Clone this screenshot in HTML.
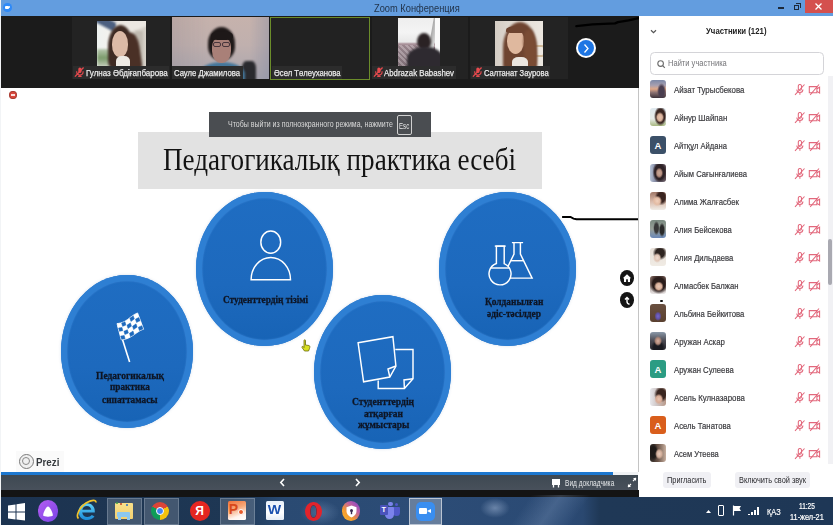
<!DOCTYPE html>
<html><head><meta charset="utf-8">
<style>
*{margin:0;padding:0;box-sizing:border-box}
html,body{width:833px;height:525px;overflow:hidden;background:#fff;font-family:"Liberation Sans",sans-serif}
.a{position:absolute}
.tile{position:absolute;background:#232323;overflow:hidden}
.ph{position:absolute;overflow:hidden}
.nm{position:absolute;height:12px;background:#2c2c2c;color:#e6e6e6;font-size:9.2px;line-height:12px;white-space:nowrap}
.nm span{position:absolute;top:0}
.mic{position:absolute;top:2px}
.av{position:absolute;left:650px;width:16px;height:17.4px;border-radius:3px;overflow:hidden}
.av span{position:absolute;left:0;top:0.5px;width:16px;height:17.4px;color:#fff;font-size:9.5px;font-weight:bold;text-align:center;line-height:17.4px}
.pn{position:absolute;left:673px;font-size:9.6px;color:#444;white-space:nowrap;line-height:11px}
.ic{position:absolute;left:794px}
.circ{position:absolute;border-radius:50%;background:linear-gradient(180deg,#1f6dc2 0%,#1d69bd 60%,#1763b5 100%);box-shadow:inset 0 0 0 5.8px #2e7fd3,inset 0 0 1.5px 6.3px rgba(70,145,225,.6),0 0 3px rgba(80,120,170,.25)}
.ct{position:absolute;font-family:"Liberation Serif",serif;font-weight:bold;color:#151a22;font-size:10.5px;text-align:center;line-height:13px;white-space:nowrap}
.tb{position:absolute;top:498.2px;height:26.5px;background:rgba(255,255,255,.17);border:1px solid rgba(200,215,230,.28)}
.ti{position:absolute}
.t{position:absolute;white-space:nowrap;transform-origin:0 0}
</style></head><body>

<!-- ============ TITLE BAR ============ -->
<div class="a" style="left:0;top:0;width:833px;height:15.5px;background:#639ddf"></div>

<div class="a" style="left:3px;top:3.3px;width:8.5px;height:8.5px;border-radius:50%;background:#2f8af8"></div>
<div class="a" style="left:4.5px;top:5.8px;width:4px;height:3.6px;background:#fff;border-radius:1px"></div>
<div class="a" style="left:8px;top:6px;width:0;height:0;border-top:1.6px solid transparent;border-bottom:1.6px solid transparent;border-right:2.2px solid #fff"></div>
<div class="a" style="left:778px;top:7px;width:6px;height:2px;background:#1d2a3a"></div>
<div class="a" style="left:794px;top:5px;width:5px;height:5px;border:1.2px solid #1d2a3a"></div>
<div class="a" style="left:796px;top:3px;width:5px;height:5px;border-top:1.2px solid #1d2a3a;border-right:1.2px solid #1d2a3a"></div>
<div class="a" style="left:805px;top:0;width:28px;height:12.5px;background:#d4504e"></div>
<svg class="a" style="left:815px;top:3px" width="7" height="7" viewBox="0 0 7 7"><path d="M0.5 0.5L6.5 6.5M6.5 0.5L0.5 6.5" stroke="#fff" stroke-width="1.3"/></svg>

<!-- ============ VIDEO STRIP ============ -->
<div class="a" style="left:1px;top:15.5px;width:639px;height:72.2px;background:#1b1b1b"></div>

<!-- tile 1 -->
<div class="tile" style="left:72.2px;top:17.3px;width:98px;height:62px"></div>
<div class="ph" style="left:97px;top:21.3px;width:48.7px;height:45.5px;background:linear-gradient(90deg,#eef2f0 0%,#f2f2ee 22%,#e0dcd4 45%,#d4cfc6 100%)">
  <div class="a" style="left:-6px;top:-4px;width:26px;height:9px;transform:rotate(28deg);background:#4c6080;filter:blur(.8px)"></div>
  <div class="a" style="left:0;top:28px;width:13px;height:18px;background:linear-gradient(180deg,#b8c8b0,#7a9a6a 50%,#c8d0c0);filter:blur(.8px)"></div>
  <div class="a" style="left:20px;top:-4px;width:30px;height:14px;transform:rotate(-20deg);background:#ece8e2;filter:blur(1px)"></div>
  <div class="a" style="left:38px;top:10px;width:8px;height:36px;background:#c0bab0;filter:blur(1.2px)"></div>
  <div class="a" style="left:11px;top:4px;width:25px;height:44px;border-radius:50% 50% 20% 20%;background:#3e2a22;filter:blur(1px)"></div>
  <div class="a" style="left:26px;top:12px;width:17px;height:36px;border-radius:40% 40% 10% 10%;transform:rotate(-8deg);background:#4a3026;filter:blur(1.1px)"></div>
  <div class="a" style="left:14.5px;top:10px;width:16px;height:26px;border-radius:50% 50% 46% 46%;background:#dcbaa6;filter:blur(.7px)"></div>
  <div class="a" style="left:19px;top:35px;width:14px;height:12px;border-radius:40% 40% 0 0;background:#eeeae4;filter:blur(.6px)"></div>
</div>
<div class="nm" style="left:73px;top:66.2px;width:96px;height:12.9px">
  <svg class="mic" style="left:1.2px;top:1.2px" width="10" height="10" viewBox="0 0 10 10"><rect x="4.3" y="0.4" width="3.2" height="5.6" rx="1.6" fill="#e84a4e"/><path d="M2.7 4.3v0.5a3.2 3.2 0 0 0 6.4 0v-0.5M5.9 8v1.3M4.2 9.4h3.4" stroke="#e84a4e" stroke-width="1.1" fill="none"/><path d="M0.9 9.6L9.6 0.5" stroke="#e84a4e" stroke-width="1.3"/></svg>
</div>

<!-- tile 2 -->
<div class="tile ph" style="left:171.5px;top:17.3px;width:97.5px;height:62px;background:linear-gradient(90deg,rgba(80,80,100,.12),rgba(0,0,0,0) 40%,rgba(0,0,0,0) 80%,rgba(120,130,160,.35)),linear-gradient(180deg,#c6b2ac 0%,#c0b0ae 45%,#aaa6ae 100%)">
  <div class="a" style="left:70px;top:44px;width:14px;height:22px;border-radius:30% 30% 0 0;background:#2a2a2e;filter:blur(.9px)"></div>
  <div class="a" style="left:27px;top:45px;width:46px;height:24px;border-radius:50% 50% 0 0;background:#44769a;filter:blur(.9px)"></div>
  <div class="a" style="left:36.1px;top:9.3px;width:27px;height:33px;border-radius:50% 50% 42% 42%;background:#1e1818;filter:blur(.9px)"></div>
  <div class="a" style="left:40.5px;top:20.5px;width:19px;height:25px;border-radius:35% 35% 48% 48%;background:#a98078;filter:blur(.7px)"></div>
  <div class="a" style="left:39px;top:14px;width:22px;height:9px;border-radius:50% 50% 30% 30%;background:#1e1818;filter:blur(.6px)"></div>
  <div class="a" style="left:41.5px;top:25px;width:8px;height:4.5px;border:1.2px solid rgba(40,30,40,.75);border-radius:2px"></div>
  <div class="a" style="left:50.5px;top:25px;width:8px;height:4.5px;border:1.2px solid rgba(40,30,40,.75);border-radius:2px"></div>
</div>
<div class="nm" style="left:171.5px;top:66.2px;width:71px;height:13.1px"></div>

<!-- tile 3 -->
<div class="tile" style="left:270px;top:17px;width:100px;height:63px;border:1.5px solid #6b8c2a;background:#222"></div>
<div class="nm" style="left:272px;top:66.2px;width:70px;height:12.6px"></div>

<!-- tile 4 -->
<div class="tile" style="left:372.3px;top:17.3px;width:96px;height:62px"></div>
<div class="ph" style="left:398.3px;top:17.7px;width:42px;height:48.8px;background:linear-gradient(180deg,#eeeeee 0%,#f4f4f4 30%,#e8e8e8 50%,#a89098 54%,#9a8890 70%,#8a7880 100%)">
  <div class="a" style="left:0;top:27px;width:42px;height:22px;background:repeating-linear-gradient(45deg,rgba(255,255,255,.18) 0 2px,rgba(0,0,0,.08) 2px 4px)"></div>
  <div class="a" style="left:33px;top:-4px;width:5px;height:40px;transform:rotate(10deg);background:linear-gradient(90deg,#a8a8a8,#d8d8d8);filter:blur(.7px)"></div>
  <div class="a" style="left:37px;top:0;width:5px;height:38px;background:#fafafa;filter:blur(.5px)"></div>
  <div class="a" style="left:19px;top:15px;width:14px;height:17px;border-radius:50%;background:#2a2224;filter:blur(.8px)"></div>
  <div class="a" style="left:9px;top:29px;width:36px;height:26px;border-radius:45% 45% 0 0;background:#2e2a30;filter:blur(.9px)"></div>
</div>
<div class="nm" style="left:372.3px;top:66.2px;width:83.5px;height:12.9px">
  <svg class="mic" style="left:1.2px;top:1.2px" width="10" height="10" viewBox="0 0 10 10"><rect x="4.3" y="0.4" width="3.2" height="5.6" rx="1.6" fill="#e84a4e"/><path d="M2.7 4.3v0.5a3.2 3.2 0 0 0 6.4 0v-0.5M5.9 8v1.3M4.2 9.4h3.4" stroke="#e84a4e" stroke-width="1.1" fill="none"/><path d="M0.9 9.6L9.6 0.5" stroke="#e84a4e" stroke-width="1.3"/></svg>
</div>

<!-- tile 5 -->
<div class="tile" style="left:470px;top:17.3px;width:97.5px;height:62px"></div>
<div class="ph" style="left:494.6px;top:21.3px;width:48.4px;height:45.2px;background:linear-gradient(90deg,#d4ccc4 0%,#e2dcd4 40%,#ece7e0 100%)">
  <div class="a" style="left:34px;top:24px;width:16px;height:12px;border:2px solid #cfb898;border-radius:3px;filter:blur(.7px)"></div>
  <div class="a" style="left:8px;top:1px;width:34px;height:52px;border-radius:50% 50% 18% 18%;background:#6e4430;filter:blur(1.1px)"></div>
  <div class="a" style="left:12.5px;top:8px;width:17px;height:25px;border-radius:46% 46% 50% 50%;background:#dfb89e;filter:blur(.7px)"></div>
  <div class="a" style="left:11px;top:5px;width:22px;height:7px;border-radius:50% 50% 20% 20%;background:#6e4430;filter:blur(.7px)"></div>
  <div class="a" style="left:29px;top:9px;width:12px;height:40px;border-radius:40%;transform:rotate(-5deg);background:#7a4c34;filter:blur(1px)"></div>
  <div class="a" style="left:17px;top:36px;width:16px;height:12px;background:#ebe6e0;border-radius:40% 40% 0 0;filter:blur(.6px)"></div>
</div>
<div class="nm" style="left:471px;top:66.2px;width:79.3px;height:12.9px">
  <svg class="mic" style="left:1.2px;top:1.2px" width="10" height="10" viewBox="0 0 10 10"><rect x="4.3" y="0.4" width="3.2" height="5.6" rx="1.6" fill="#e84a4e"/><path d="M2.7 4.3v0.5a3.2 3.2 0 0 0 6.4 0v-0.5M5.9 8v1.3M4.2 9.4h3.4" stroke="#e84a4e" stroke-width="1.1" fill="none"/><path d="M0.9 9.6L9.6 0.5" stroke="#e84a4e" stroke-width="1.3"/></svg>
</div>

<!-- next button -->
<div class="a" style="left:576px;top:38.3px;width:20px;height:20px;border-radius:50%;background:#fff"></div>
<div class="a" style="left:577.8px;top:40.1px;width:16.4px;height:16.4px;border-radius:50%;background:#1e76e4"></div>
<svg class="a" style="left:582px;top:43px" width="8" height="11" viewBox="0 0 8 11"><path d="M2.5 1.5L6 5.5L2.5 9.5" stroke="#fff" stroke-width="1.3" fill="none"/></svg>

<!-- ============ PREZI AREA ============ -->
<div class="a" style="left:1px;top:87.7px;width:639px;height:385px;background:#fff"></div>
<div class="a" style="left:9.3px;top:90.6px;width:7.6px;height:8.6px;border-radius:50%;background:#d8473c;border:1px solid #a83a30"></div>
<div class="a" style="left:11.3px;top:94.2px;width:3.6px;height:1.4px;background:#fbe0dc"></div>
<div class="a" style="left:138px;top:131.6px;width:404px;height:57px;background:#e2e2e2"></div>
<div class="a" style="left:209px;top:112px;width:222px;height:25px;background:#4a4d51"></div>
<div class="a" style="left:396.8px;top:115.2px;width:15px;height:19.6px;border:1px solid #d0d0d0;border-radius:2px;font-size:6.6px;color:#eee;text-align:center;line-height:15px"></div>

<div class="circ" style="left:196.2px;top:192.3px;width:136.6px;height:154px"></div>
<div class="circ" style="left:61.3px;top:274.9px;width:131.6px;height:152.9px"></div>
<div class="circ" style="left:313.9px;top:295.3px;width:137px;height:153.5px"></div>
<div class="circ" style="left:439.4px;top:192.2px;width:137px;height:154px"></div>

<!-- icons -->
<svg class="a" style="left:0;top:0" width="640" height="470" viewBox="0 0 640 470">
 <g fill="none" stroke="#fff" stroke-width="1.45">
  <!-- person -->
  <ellipse cx="270.75" cy="242.15" rx="9.9" ry="11.1"/>
  <path d="M251.1 279.8 A19.7 22.4 0 0 1 290.5 279.8 Z"/>
  <!-- flasks -->
  <path d="M511.9 242.6 H523.1 M514 242.6 V254.1 L502.3 278.1 H532.1 L520.4 254.1 V242.6"/>
  <path d="M510.8 260.7 H523.6"/>
  <path d="M496.4 246.1 V263.5 A11 11 0 1 0 504.2 263.7 V246.1 Z" fill="#1d69bd"/>
  <path d="M494.8 246.1 H505.7"/>
  <path d="M490.8 268 H509.4"/>
  <!-- pages -->
  <path d="M358.1 342.8 L392.9 336.7 L395.9 366 L389.8 377 L363.6 381.8 Z"/>
  <path d="M389.8 377 L388 369 L395.9 366"/>
  <path d="M395.3 349.5 H413 V378.8 L404.4 388.5 H378.2 V380.5"/>
  <path d="M404.4 388.5 L404 380 L413 378.8"/>
 </g>
 <!-- flag -->
 <path d="M118.2 326 L129.6 362" stroke="#fff" stroke-width="1.6"/>
 <path d="M117.00 323.60 L118.72 323.35 L120.43 323.00 L122.15 322.49 L123.87 321.76 L125.58 320.81 L127.30 319.66 L129.02 318.39 L130.73 317.06 L132.45 315.79 L134.17 314.64 L135.88 313.69 L137.60 312.96 L139.10 317.01 L140.60 321.06 L142.10 325.11 L143.60 329.16 L141.73 329.89 L139.87 330.84 L138.00 331.99 L136.13 333.26 L134.27 334.59 L132.40 335.86 L130.53 337.01 L128.67 337.96 L126.80 338.69 L124.93 339.20 L123.07 339.55 L121.20 339.80 L120.15 335.75 L119.10 331.70 L118.05 327.65Z" fill="#fff" stroke="#fff" stroke-width="0.8" stroke-linejoin="round"/>
 <path d="M118.58 328.00 L120.26 327.74 L121.95 327.39 L122.86 330.63 L121.14 330.98 L119.42 331.24Z M120.69 336.10 L122.45 335.84 L124.21 335.49 L125.12 338.73 L123.33 339.08 L121.54 339.34Z M121.65 323.10 L123.30 322.48 L124.95 321.66 L125.93 324.90 L124.25 325.72 L122.57 326.34Z M123.94 331.20 L125.67 330.58 L127.39 329.76 L128.37 333.00 L126.62 333.82 L124.86 334.44Z M127.01 325.22 L128.70 324.12 L130.39 322.89 L131.44 326.13 L129.72 327.36 L128.01 328.46Z M129.49 333.32 L131.25 332.22 L133.01 330.99 L134.06 334.23 L132.27 335.46 L130.48 336.56Z M129.90 318.21 L131.56 316.95 L133.21 315.76 L134.33 319.00 L132.65 320.19 L130.97 321.45Z M132.56 326.31 L134.29 325.05 L136.01 323.86 L137.13 327.10 L135.38 328.29 L133.63 329.55Z M135.45 319.27 L137.14 318.32 L138.83 317.57 L140.02 320.81 L138.30 321.56 L136.59 322.51Z M138.29 327.37 L140.05 326.42 L141.81 325.67 L143.00 328.91 L141.21 329.66 L139.43 330.61Z" fill="#1d69bd" stroke="#1d69bd" stroke-width="0.5" stroke-linejoin="round"/>
</svg>


<!-- cursor -->
<svg class="a" style="left:301px;top:339px" width="10" height="13" viewBox="0 0 10 13"><path d="M3 1.5 C3 0.5 4.5 0.5 4.5 1.5 V6 L8 6.5 C9 6.8 9 8 8.5 9.5 L7.5 12 H3.5 L1 8.5 C0.5 7.5 1.5 7 2.5 7.8 L3 8.5 Z" fill="#d8e020" stroke="#6a6a10" stroke-width="0.8"/></svg>

<!-- nav buttons -->
<div class="a" style="left:619.6px;top:270.1px;width:14.2px;height:15.6px;border-radius:50%;background:#151515"></div>
<svg class="a" style="left:621.7px;top:272.5px" width="10" height="10" viewBox="0 0 10 10"><path d="M0.8 5.2 L5 1.2 L9.2 5.2 L8 5.2 V9 H2 V5.2 Z" fill="#fff"/><rect x="4.1" y="6.3" width="1.8" height="2.7" fill="#151515"/></svg>
<div class="a" style="left:619.6px;top:292px;width:14.2px;height:15.6px;border-radius:50%;background:#151515"></div>
<svg class="a" style="left:622px;top:295.5px" width="10" height="10" viewBox="0 0 10 10"><path d="M3 3.5 L5 1.5 L7 3.5 M5 1.8 V5.5 C5 7 6 8 7.5 8.2" stroke="#fff" stroke-width="1.4" fill="none"/></svg>

<!-- prezi logo -->
<div class="a" style="left:16px;top:451px;width:48px;height:21px;background:#fafafa"></div>
<div class="a" style="left:18.5px;top:453.5px;width:15px;height:15px;border-radius:50%;border:1.6px solid #7a7a7a;background:#f0f0f0"></div>
<div class="a" style="left:22px;top:457px;width:8px;height:8px;border-radius:50%;border:1.2px solid #8a8a8a"></div>

<!-- pen strokes -->
<svg class="a" style="left:0;top:0" width="640" height="300" viewBox="0 0 640 300">
<path d="M576.3 26.2 L592.5 24.4 L615 23.4 L618 22.1 L628.6 20.3 L638.5 18.2" stroke="#000" stroke-width="2.3" stroke-linejoin="round" stroke-linecap="round" fill="none"/>
<path d="M562.1 217 H570.5 L573.5 218.7 L576.5 219.3 H639" stroke="#000" stroke-width="1.9" fill="none"/>
</svg>

<!-- ============ PREZI CONTROL BAR ============ -->
<div class="a" style="left:1px;top:472.3px;width:612px;height:2.7px;background:#1d78d0"></div>
<div class="a" style="left:613px;top:472.3px;width:25px;height:2.7px;background:#f0f2f4"></div>
<div class="a" style="left:1px;top:475px;width:637px;height:14.5px;background:linear-gradient(180deg,#3e4952,#48505b)"></div>
<div class="a" style="left:1px;top:489.5px;width:639px;height:8px;background:#141414"></div>
<svg class="a" style="left:279px;top:478px" width="7" height="9" viewBox="0 0 7 9"><path d="M5 1 L1.8 4.5 L5 8" stroke="#fff" stroke-width="1.6" fill="none"/></svg>
<svg class="a" style="left:354px;top:478px" width="7" height="9" viewBox="0 0 7 9"><path d="M2 1 L5.2 4.5 L2 8" stroke="#fff" stroke-width="1.6" fill="none"/></svg>
<svg class="a" style="left:551px;top:477.5px" width="10" height="10" viewBox="0 0 10 10"><path d="M1 1h8v6h-8z" fill="#fff"/><path d="M2.5 7v2.5M7.5 7v2.5" stroke="#fff" stroke-width="1.3"/></svg>
<svg class="a" style="left:627px;top:477px" width="10" height="11" viewBox="0 0 10 11"><path d="M1 10 L4 7 M1.5 7.5 V9.5 H3.5 M9 1 L6 4 M6.5 1.5 H8.5 V3.5" stroke="#fff" stroke-width="1.1" fill="none"/></svg>

<!-- ============ PARTICIPANTS PANEL ============ -->
<div class="a" style="left:639px;top:15.5px;width:194px;height:482px;background:#fff"></div>
<svg class="a" style="left:650.3px;top:28.8px" width="7" height="5" viewBox="0 0 7 5"><path d="M1 1.2 L3.5 3.6 L6 1.2" stroke="#555" stroke-width="1.2" fill="none"/></svg>
<div class="a" style="left:650.4px;top:52.4px;width:174px;height:22.2px;border:1.3px solid #d4d4d8;border-radius:4.5px"></div>
<svg class="a" style="left:657px;top:59.5px" width="9" height="9" viewBox="0 0 9 9"><circle cx="3.6" cy="3.6" r="2.8" stroke="#6a6a6a" stroke-width="1.1" fill="none"/><path d="M5.7 5.7 L7.8 7.8" stroke="#6a6a6a" stroke-width="1.2"/></svg>
<div class="a" style="left:828px;top:76px;width:5px;height:388px;background:#f1f1f4"></div>
<div class="a" style="left:827.5px;top:239px;width:4.5px;height:46px;border-radius:2px;background:#a9a9b1"></div>

<div class="av" style="top:80.2px;background:radial-gradient(ellipse 28% 45% at 72% 62%,#4a3e50 0,#4a3e50 60%,transparent 100%),linear-gradient(180deg,#7c88a8 0%,#a8a0b0 30%,#e0a888 50%,#8a7070 70%,#3a3038 100%)"></div>
<svg class="ic" style="top:83.7px" width="27" height="12" viewBox="0 0 27 12"><g fill="none" stroke="#e2687c" stroke-width="1.05"><path d="M4.3 2.1a1.6 1.6 0 0 1 3.2 0v2.6a1.6 1.6 0 0 1-3.2 0z"/><path d="M2.9 5.5a3 3 0 0 0 6 0M5.9 8.5v2.3"/><path d="M1 10.8L10.5 0.5"/><path d="M15.3 2.6h7.6v6.1h-7.6z"/><path d="M22.9 4.8l2.7-1.6v5.8l-2.7-1.6"/><path d="M16.2 10.8L25 0.5"/></g></svg>
<div class="av" style="top:108.2px;background:radial-gradient(ellipse 26% 30% at 62% 52%,#e6c2ae 0,#d8b09a 60%,transparent 100%),radial-gradient(ellipse 40% 55% at 65% 45%,#3a2622 0,#3a2622 70%,transparent 100%),linear-gradient(180deg,#dfe8ee 0%,#e8ecea 60%,#a8b880 100%)"></div>
<svg class="ic" style="top:111.7px" width="27" height="12" viewBox="0 0 27 12"><g fill="none" stroke="#e2687c" stroke-width="1.05"><path d="M4.3 2.1a1.6 1.6 0 0 1 3.2 0v2.6a1.6 1.6 0 0 1-3.2 0z"/><path d="M2.9 5.5a3 3 0 0 0 6 0M5.9 8.5v2.3"/><path d="M1 10.8L10.5 0.5"/><path d="M15.3 2.6h7.6v6.1h-7.6z"/><path d="M22.9 4.8l2.7-1.6v5.8l-2.7-1.6"/><path d="M16.2 10.8L25 0.5"/></g></svg>
<div class="av" style="top:136.2px;background:#3b5068"><span>A</span></div>
<svg class="ic" style="top:139.7px" width="27" height="12" viewBox="0 0 27 12"><g fill="none" stroke="#e2687c" stroke-width="1.05"><path d="M4.3 2.1a1.6 1.6 0 0 1 3.2 0v2.6a1.6 1.6 0 0 1-3.2 0z"/><path d="M2.9 5.5a3 3 0 0 0 6 0M5.9 8.5v2.3"/><path d="M1 10.8L10.5 0.5"/><path d="M15.3 2.6h7.6v6.1h-7.6z"/><path d="M22.9 4.8l2.7-1.6v5.8l-2.7-1.6"/><path d="M16.2 10.8L25 0.5"/></g></svg>
<div class="av" style="top:164.2px;background:radial-gradient(ellipse 24% 30% at 58% 50%,#c8a898 0,#b89080 60%,transparent 100%),radial-gradient(ellipse 45% 60% at 60% 45%,#2e2226 0,#2e2226 70%,transparent 100%),linear-gradient(90deg,#b8c4d8 0%,#8a90a8 30%,#5a4a50 100%)"></div>
<svg class="ic" style="top:167.7px" width="27" height="12" viewBox="0 0 27 12"><g fill="none" stroke="#e2687c" stroke-width="1.05"><path d="M4.3 2.1a1.6 1.6 0 0 1 3.2 0v2.6a1.6 1.6 0 0 1-3.2 0z"/><path d="M2.9 5.5a3 3 0 0 0 6 0M5.9 8.5v2.3"/><path d="M1 10.8L10.5 0.5"/><path d="M15.3 2.6h7.6v6.1h-7.6z"/><path d="M22.9 4.8l2.7-1.6v5.8l-2.7-1.6"/><path d="M16.2 10.8L25 0.5"/></g></svg>
<div class="av" style="top:192.2px;background:radial-gradient(ellipse 30% 30% at 45% 50%,#f0d0bc 0,#e4bca4 60%,transparent 100%),radial-gradient(ellipse 40% 45% at 70% 30%,#3a2420 0,#3a2420 60%,transparent 100%),linear-gradient(180deg,#a07868 0%,#d8b8a8 50%,#f0ece6 100%)"></div>
<svg class="ic" style="top:195.7px" width="27" height="12" viewBox="0 0 27 12"><g fill="none" stroke="#e2687c" stroke-width="1.05"><path d="M4.3 2.1a1.6 1.6 0 0 1 3.2 0v2.6a1.6 1.6 0 0 1-3.2 0z"/><path d="M2.9 5.5a3 3 0 0 0 6 0M5.9 8.5v2.3"/><path d="M1 10.8L10.5 0.5"/><path d="M15.3 2.6h7.6v6.1h-7.6z"/><path d="M22.9 4.8l2.7-1.6v5.8l-2.7-1.6"/><path d="M16.2 10.8L25 0.5"/></g></svg>
<div class="av" style="top:220.2px;background:radial-gradient(ellipse 20% 40% at 40% 45%,#383838 0,#383838 60%,transparent 100%),radial-gradient(ellipse 20% 40% at 75% 55%,#2a2a2a 0,#2a2a2a 60%,transparent 100%),linear-gradient(180deg,#7a8a80 0%,#98a098 50%,#6a88b8 100%)"></div>
<svg class="ic" style="top:223.7px" width="27" height="12" viewBox="0 0 27 12"><g fill="none" stroke="#e2687c" stroke-width="1.05"><path d="M4.3 2.1a1.6 1.6 0 0 1 3.2 0v2.6a1.6 1.6 0 0 1-3.2 0z"/><path d="M2.9 5.5a3 3 0 0 0 6 0M5.9 8.5v2.3"/><path d="M1 10.8L10.5 0.5"/><path d="M15.3 2.6h7.6v6.1h-7.6z"/><path d="M22.9 4.8l2.7-1.6v5.8l-2.7-1.6"/><path d="M16.2 10.8L25 0.5"/></g></svg>
<div class="av" style="top:248.2px;background:radial-gradient(ellipse 26% 28% at 45% 55%,#f0dcd0 0,#e0c4b4 60%,transparent 100%),radial-gradient(ellipse 45% 40% at 62% 28%,#2e2420 0,#2e2420 60%,transparent 100%),linear-gradient(180deg,#e8e0d8 0%,#f0ebe4 100%)"></div>
<svg class="ic" style="top:251.7px" width="27" height="12" viewBox="0 0 27 12"><g fill="none" stroke="#e2687c" stroke-width="1.05"><path d="M4.3 2.1a1.6 1.6 0 0 1 3.2 0v2.6a1.6 1.6 0 0 1-3.2 0z"/><path d="M2.9 5.5a3 3 0 0 0 6 0M5.9 8.5v2.3"/><path d="M1 10.8L10.5 0.5"/><path d="M15.3 2.6h7.6v6.1h-7.6z"/><path d="M22.9 4.8l2.7-1.6v5.8l-2.7-1.6"/><path d="M16.2 10.8L25 0.5"/></g></svg>
<div class="av" style="top:276.2px;background:radial-gradient(ellipse 30% 28% at 55% 58%,#e8c8b8 0,#d8ae98 60%,transparent 100%),radial-gradient(ellipse 60% 55% at 55% 45%,#2a1c1a 0,#2a1c1a 65%,transparent 100%),linear-gradient(180deg,#6a5048 0%,#e8e4e4 100%)"></div>
<svg class="ic" style="top:279.7px" width="27" height="12" viewBox="0 0 27 12"><g fill="none" stroke="#e2687c" stroke-width="1.05"><path d="M4.3 2.1a1.6 1.6 0 0 1 3.2 0v2.6a1.6 1.6 0 0 1-3.2 0z"/><path d="M2.9 5.5a3 3 0 0 0 6 0M5.9 8.5v2.3"/><path d="M1 10.8L10.5 0.5"/><path d="M15.3 2.6h7.6v6.1h-7.6z"/><path d="M22.9 4.8l2.7-1.6v5.8l-2.7-1.6"/><path d="M16.2 10.8L25 0.5"/></g></svg>
<div class="av" style="top:304.2px;background:radial-gradient(ellipse 22% 26% at 50% 68%,#7868c8 0,#6050a8 60%,transparent 100%),linear-gradient(180deg,#6a5040 0%,#5a4030 100%)"></div>
<div class="a" style="left:660px;top:299.7px;width:2.5px;height:2.5px;border-radius:50%;background:#111"></div>
<svg class="ic" style="top:307.7px" width="27" height="12" viewBox="0 0 27 12"><g fill="none" stroke="#e2687c" stroke-width="1.05"><path d="M4.3 2.1a1.6 1.6 0 0 1 3.2 0v2.6a1.6 1.6 0 0 1-3.2 0z"/><path d="M2.9 5.5a3 3 0 0 0 6 0M5.9 8.5v2.3"/><path d="M1 10.8L10.5 0.5"/><path d="M15.3 2.6h7.6v6.1h-7.6z"/><path d="M22.9 4.8l2.7-1.6v5.8l-2.7-1.6"/><path d="M16.2 10.8L25 0.5"/></g></svg>
<div class="av" style="top:332.2px;background:radial-gradient(ellipse 25% 28% at 50% 50%,#d8b0a0 0,#b08878 60%,transparent 100%),radial-gradient(ellipse 45% 40% at 50% 85%,#1a1a20 0,#1a1a20 60%,transparent 100%),linear-gradient(180deg,#8a98a8 0%,#4a4850 50%,#2a2a30 100%)"></div>
<svg class="ic" style="top:335.7px" width="27" height="12" viewBox="0 0 27 12"><g fill="none" stroke="#e2687c" stroke-width="1.05"><path d="M4.3 2.1a1.6 1.6 0 0 1 3.2 0v2.6a1.6 1.6 0 0 1-3.2 0z"/><path d="M2.9 5.5a3 3 0 0 0 6 0M5.9 8.5v2.3"/><path d="M1 10.8L10.5 0.5"/><path d="M15.3 2.6h7.6v6.1h-7.6z"/><path d="M22.9 4.8l2.7-1.6v5.8l-2.7-1.6"/><path d="M16.2 10.8L25 0.5"/></g></svg>
<div class="av" style="top:360.2px;background:#2b9c83"><span>A</span></div>
<svg class="ic" style="top:363.7px" width="27" height="12" viewBox="0 0 27 12"><g fill="none" stroke="#e2687c" stroke-width="1.05"><path d="M4.3 2.1a1.6 1.6 0 0 1 3.2 0v2.6a1.6 1.6 0 0 1-3.2 0z"/><path d="M2.9 5.5a3 3 0 0 0 6 0M5.9 8.5v2.3"/><path d="M1 10.8L10.5 0.5"/><path d="M15.3 2.6h7.6v6.1h-7.6z"/><path d="M22.9 4.8l2.7-1.6v5.8l-2.7-1.6"/><path d="M16.2 10.8L25 0.5"/></g></svg>
<div class="av" style="top:388.2px;background:radial-gradient(ellipse 28% 30% at 55% 62%,#e8c4b0 0,#d8aa94 60%,transparent 100%),radial-gradient(ellipse 45% 45% at 70% 35%,#3a2620 0,#3a2620 60%,transparent 100%),linear-gradient(90deg,#e8e8ec 0%,#d0c8c8 40%,#b89888 100%)"></div>
<svg class="ic" style="top:391.7px" width="27" height="12" viewBox="0 0 27 12"><g fill="none" stroke="#e2687c" stroke-width="1.05"><path d="M4.3 2.1a1.6 1.6 0 0 1 3.2 0v2.6a1.6 1.6 0 0 1-3.2 0z"/><path d="M2.9 5.5a3 3 0 0 0 6 0M5.9 8.5v2.3"/><path d="M1 10.8L10.5 0.5"/><path d="M15.3 2.6h7.6v6.1h-7.6z"/><path d="M22.9 4.8l2.7-1.6v5.8l-2.7-1.6"/><path d="M16.2 10.8L25 0.5"/></g></svg>
<div class="av" style="top:416.2px;background:#d95e1c"><span>A</span></div>
<svg class="ic" style="top:419.7px" width="27" height="12" viewBox="0 0 27 12"><g fill="none" stroke="#e2687c" stroke-width="1.05"><path d="M4.3 2.1a1.6 1.6 0 0 1 3.2 0v2.6a1.6 1.6 0 0 1-3.2 0z"/><path d="M2.9 5.5a3 3 0 0 0 6 0M5.9 8.5v2.3"/><path d="M1 10.8L10.5 0.5"/><path d="M15.3 2.6h7.6v6.1h-7.6z"/><path d="M22.9 4.8l2.7-1.6v5.8l-2.7-1.6"/><path d="M16.2 10.8L25 0.5"/></g></svg>
<div class="av" style="top:444.2px;background:radial-gradient(ellipse 26% 30% at 58% 55%,#e8ccbc 0,#d0ac98 60%,transparent 100%),radial-gradient(ellipse 30% 50% at 22% 45%,#1e1a18 0,#1e1a18 60%,transparent 100%),linear-gradient(90deg,#2a2420 0%,#6a5448 50%,#c8b0a0 100%)"></div>
<svg class="ic" style="top:447.7px" width="27" height="12" viewBox="0 0 27 12"><g fill="none" stroke="#e2687c" stroke-width="1.05"><path d="M4.3 2.1a1.6 1.6 0 0 1 3.2 0v2.6a1.6 1.6 0 0 1-3.2 0z"/><path d="M2.9 5.5a3 3 0 0 0 6 0M5.9 8.5v2.3"/><path d="M1 10.8L10.5 0.5"/><path d="M15.3 2.6h7.6v6.1h-7.6z"/><path d="M22.9 4.8l2.7-1.6v5.8l-2.7-1.6"/><path d="M16.2 10.8L25 0.5"/></g></svg>

<div class="a" style="left:663.2px;top:472.4px;width:47.5px;height:15.2px;border-radius:3px;background:#f0f0f4;font-size:8.4px;color:#2a2a2a;text-align:center;line-height:15px;white-space:nowrap"></div>
<div class="a" style="left:735px;top:472.4px;width:75.3px;height:15.2px;border-radius:3px;background:#f0f0f4;font-size:8.4px;color:#2a2a2a;text-align:center;line-height:15px;white-space:nowrap"></div>


<div class="a" style="left:637.8px;top:87.7px;width:1px;height:384.6px;background:#c4c4c4"></div>
<!-- ============ TASKBAR ============ -->
<div class="a" style="left:0;top:497px;width:833px;height:28px;background:linear-gradient(90deg,#1c3350 0%,#1e3754 28%,#2a4a72 34%,#2c4c76 50%,#2b4a74 68%,#2a4870 70%,#1f3856 72%,#1e3756 100%)"></div>
<div class="a" style="left:300px;top:500px;width:40px;height:25px;background:radial-gradient(ellipse at 50% 50%,rgba(140,170,210,.35),rgba(0,0,0,0) 70%)"></div>
<div class="a" style="left:480px;top:498px;width:30px;height:20px;background:radial-gradient(ellipse at 50% 50%,rgba(180,200,230,.45),rgba(0,0,0,0) 70%)"></div>
<div class="a" style="left:520px;top:495px;width:60px;height:32px;transform:skewX(-35deg);background:linear-gradient(90deg,rgba(0,0,0,0),rgba(150,175,210,.25) 50%,rgba(0,0,0,0))"></div>
<!-- start -->
<svg class="a" style="left:7.5px;top:502.5px" width="18" height="18" viewBox="0 0 18 18"><path d="M0 2.5 L7.5 1.4 V8.4 H0Z M8.5 1.2 L17 0 V8.4 H8.5Z M0 9.4 H7.5 V16.4 L0 15.4Z M8.5 9.4 H17 V17.6 L8.5 16.5Z" fill="#fff"/></svg>
<!-- alice -->
<div class="a" style="left:37.8px;top:500.4px;width:20.4px;height:21.6px;border-radius:50%;background:linear-gradient(135deg,#b45cf0,#7a44e8)"></div>
<svg class="a" style="left:42px;top:504.5px" width="12" height="13" viewBox="0 0 12 13"><path d="M6 1.5 C8 1.5 11.2 8.5 10.8 10.5 C10.3 12 1.7 12 1.2 10.5 C0.8 8.5 4 1.5 6 1.5Z" fill="#fff"/></svg>
<!-- IE -->
<svg class="a" style="left:75px;top:499px" width="22" height="23" viewBox="0 0 22 23">
 <defs><linearGradient id="ieg" x1="0" y1="0" x2="0" y2="1"><stop offset="0" stop-color="#5fd0f8"/><stop offset="1" stop-color="#1a8ad8"/></linearGradient></defs>
 <path d="M17.8 13.5 H7.2 C7.6 16.5 9.8 18 12.3 18 C14.3 18 15.8 17.2 16.8 16 L19.5 17.6 C17.8 20 15.2 21 12.2 21 C7 21 3.6 17.6 3.6 12.7 C3.6 7.8 7.2 4.2 12 4.2 C16.8 4.2 19.8 7.6 19.8 12.3 V13.5Z M7.3 10.8 H16.2 C15.9 8.4 14.3 7 11.9 7 C9.5 7 7.8 8.5 7.3 10.8Z" fill="url(#ieg)"/>
 <path d="M3.5 19.5 C0.5 17 4.5 8 11 4 C16.5 0.8 21.5 0.5 20.8 3.5" stroke="#f2c22a" stroke-width="1.7" fill="none"/>
</svg>
<!-- explorer tile -->
<div class="tb" style="left:106.7px;width:35.3px"></div>
<div class="a" style="left:114.5px;top:503px;width:18px;height:15.5px;background:linear-gradient(180deg,#f8e08a,#f4d070);border-radius:1px"></div>
<div class="a" style="left:116px;top:502px;width:2px;height:2px;border-radius:50%;background:#3aa040"></div>
<div class="a" style="left:120px;top:503px;width:2px;height:2px;border-radius:50%;background:#c04020"></div>
<div class="a" style="left:126px;top:504px;width:2px;height:2px;border-radius:50%;background:#3070c0"></div>
<div class="a" style="left:117px;top:511.5px;width:13px;height:5px;background:#8cc8f0;border-radius:1px"></div>
<div class="a" style="left:117.5px;top:516px;width:3px;height:4px;background:#8cc8f0"></div>
<div class="a" style="left:126.5px;top:516px;width:3px;height:4px;background:#8cc8f0"></div>
<!-- chrome tile -->
<div class="tb" style="left:144.4px;width:34.8px"></div>
<div class="a" style="left:151px;top:502px;width:18px;height:18px;border-radius:50%;background:conic-gradient(from -60deg,#db4437 0deg 120deg,#f4c20d 120deg 240deg,#0f9d58 240deg 360deg)"></div>
<div class="a" style="left:156px;top:507px;width:8px;height:8px;border-radius:50%;background:#4285f4;border:1.5px solid #fff"></div>
<!-- yandex -->
<div class="a" style="left:189.5px;top:501px;width:20px;height:20px;border-radius:50%;background:#e52620"></div>
<div class="a" style="left:189.5px;top:503.5px;width:20px;font-size:12px;line-height:14px;color:#fff;text-align:center;font-weight:bold">Я</div>
<!-- ppt tile -->
<div class="tb" style="left:220px;width:34.9px"></div>
<div class="a" style="left:228px;top:500.8px;width:17.5px;height:19px;border-radius:1.5px;background:linear-gradient(160deg,#f07038 0%,#f7a878 40%,#fff4ee 75%,#ffffff 100%)"></div>
<div class="a" style="left:228.8px;top:501.5px;width:12px;font-size:14px;line-height:15px;color:#d8481a;font-weight:bold;white-space:nowrap">P</div>
<div class="a" style="left:237.5px;top:509px;width:6px;height:6px;border-radius:50%;background:#e85a2a;border:1.2px solid #fff"></div>
<!-- word -->
<div class="a" style="left:266px;top:501px;width:18px;height:19px;border-radius:1.5px;background:linear-gradient(180deg,#e8f0fa,#ffffff 60%,#e4ecf6)"></div>
<div class="a" style="left:264.5px;top:501.5px;width:19px;font-size:13.5px;line-height:15px;color:#1c52b0;font-weight:bold;text-align:center;white-space:nowrap;transform:scaleX(1.05)">W</div>
<!-- opera -->
<div class="a" style="left:304.9px;top:501.5px;width:17.2px;height:19.8px;border-radius:50%;border-style:solid;border-color:#e3232b;border-width:3px 5px;background:transparent;box-shadow:inset 0 0 0 0.6px #a01018"></div>
<!-- shield -->
<div class="a" style="left:341.8px;top:501.2px;width:18.2px;height:19.8px;border-radius:50%;background:linear-gradient(225deg,#7b3fd0 0%,#c060a0 35%,#f39a30 65%,#f8b830 100%)"></div>
<svg class="a" style="left:345.5px;top:504.5px" width="11" height="13" viewBox="0 0 11 13"><path d="M5.5 0.5 L10.5 2.2 V6 C10.5 9.2 8 11.5 5.5 12.5 C3 11.5 0.5 9.2 0.5 6 V2.2 Z" fill="#fff"/><circle cx="5.5" cy="5.6" r="1.5" fill="#3a2a50"/><rect x="4.8" y="6.2" width="1.4" height="3" fill="#3a2a50"/></svg>
<!-- teams -->
<div class="a" style="left:388px;top:501.5px;width:4.5px;height:4.5px;border-radius:50%;background:#7b83eb"></div>
<div class="a" style="left:394.5px;top:502.5px;width:3.8px;height:3.8px;border-radius:50%;background:#5059c9"></div>
<div class="a" style="left:392.5px;top:507px;width:7px;height:9px;border-radius:1px 1px 3.5px 3.5px;background:#5059c9"></div>
<div class="a" style="left:384.5px;top:507px;width:9px;height:12px;border-radius:1px 1px 4.5px 4.5px;background:#7b83eb"></div>
<div class="a" style="left:379.7px;top:505px;width:8px;height:9.5px;border-radius:1px;background:#4b53bc;font-size:7.5px;line-height:9.5px;color:#fff;text-align:center;font-weight:bold">T</div>
<!-- zoom tile -->
<div class="tb" style="left:409.3px;width:32.4px;background:rgba(255,255,255,.28);border:1px solid rgba(255,255,255,.55)"></div>
<div class="a" style="left:415.5px;top:501.5px;width:19px;height:19px;border-radius:5px;background:#3a8ef0"></div>
<div class="a" style="left:419px;top:508px;width:8px;height:6px;border-radius:1px;background:#fff"></div>
<div class="a" style="left:427px;top:508.5px;width:0;height:0;border-top:2.5px solid transparent;border-bottom:2.5px solid transparent;border-right:4px solid #fff"></div>

<div class="a" style="left:0;top:0;width:1.2px;height:525px;background:#f2f4f6"></div>
<!-- tray -->
<svg class="a" style="left:705px;top:509px" width="7" height="5" viewBox="0 0 7 5"><path d="M1 4 L3.5 1 L6 4Z" fill="#fff"/></svg>
<div class="a" style="left:718px;top:505px;width:6px;height:11px;border:1.2px solid #fff;border-radius:1px"></div>
<svg class="a" style="left:732px;top:505px" width="10" height="11" viewBox="0 0 10 11"><path d="M1.5 0.5V10.5" stroke="#fff" stroke-width="1.2"/><path d="M2 1H9L7.5 3.5L9 6H2Z" fill="#fff"/></svg>
<svg class="a" style="left:747px;top:506px" width="12" height="10" viewBox="0 0 12 10"><path d="M1 9h2v-1h-2zM4 9h2v-3h-2zM7 9h2v-5h-2zM10 9h2v-8h-2z" fill="#fff"/></svg>
<div class="t" id="t0" style="left:374.20px;top:2.73px;font-family:'Liberation Sans',sans-serif;font-size:10.32px;line-height:12.38px;font-weight:normal;color:#22344c;transform:scaleX(0.9002);">Zoom Конференция</div>
<div class="t" id="t1" style="left:85.90px;top:66.82px;font-family:'Liberation Sans',sans-serif;font-size:9.81px;line-height:11.77px;font-weight:normal;color:#ececec;transform:scaleX(0.8175);-webkit-text-stroke:0.25px #ececec">Гулназ Әбдіғапбарова</div>
<div class="t" id="t2" style="left:174.30px;top:66.82px;font-family:'Liberation Sans',sans-serif;font-size:9.81px;line-height:11.77px;font-weight:normal;color:#ececec;transform:scaleX(0.7879);-webkit-text-stroke:0.25px #ececec">Сауле Джамилова</div>
<div class="t" id="t3" style="left:273.70px;top:66.82px;font-family:'Liberation Sans',sans-serif;font-size:9.81px;line-height:11.77px;font-weight:normal;color:#ececec;transform:scaleX(0.7848);-webkit-text-stroke:0.25px #ececec">Әсел Төлеуханова</div>
<div class="t" id="t4" style="left:383.70px;top:66.82px;font-family:'Liberation Sans',sans-serif;font-size:9.81px;line-height:11.77px;font-weight:normal;color:#ececec;transform:scaleX(0.7983);-webkit-text-stroke:0.25px #ececec">Abdrazak Babashev</div>
<div class="t" id="t5" style="left:483.70px;top:66.82px;font-family:'Liberation Sans',sans-serif;font-size:9.81px;line-height:11.77px;font-weight:normal;color:#ececec;transform:scaleX(0.7735);-webkit-text-stroke:0.25px #ececec">Салтанат Заурова</div>
<div class="t" id="t6" style="left:227.70px;top:119.04px;font-family:'Liberation Sans',sans-serif;font-size:8.72px;line-height:10.47px;font-weight:normal;color:#d8d8d8;transform:scaleX(0.8058);">Чтобы выйти из полноэкранного режима, нажмите</div>
<div class="t" id="t7" style="left:399.30px;top:120.84px;font-family:'Liberation Sans',sans-serif;font-size:8.72px;line-height:10.47px;font-weight:normal;color:#e8e8e8;transform:scaleX(0.7012);">Esc</div>
<div class="t" id="t8" style="left:163.00px;top:141.25px;font-family:'Liberation Serif',serif;font-size:30.99px;line-height:37.19px;font-weight:normal;color:#131313;transform:scaleX(0.8757);">Педагогикалық практика есебі</div>
<div class="t" id="t9" style="left:223.20px;top:293.18px;font-family:'Liberation Serif',serif;font-size:10.69px;line-height:12.82px;font-weight:bold;color:#0e1524;transform:scaleX(0.8724);-webkit-text-stroke:0.3px #0e1524">Студенттердің тізімі</div>
<div class="t" id="t10" style="left:96.30px;top:368.88px;font-family:'Liberation Serif',serif;font-size:10.69px;line-height:12.82px;font-weight:bold;color:#0e1524;transform:scaleX(0.8897);-webkit-text-stroke:0.3px #0e1524">Педагогикалық</div>
<div class="t" id="t11" style="left:110.40px;top:379.98px;font-family:'Liberation Serif',serif;font-size:10.69px;line-height:12.82px;font-weight:bold;color:#0e1524;transform:scaleX(0.8607);-webkit-text-stroke:0.3px #0e1524">практика</div>
<div class="t" id="t12" style="left:102.30px;top:392.68px;font-family:'Liberation Serif',serif;font-size:10.69px;line-height:12.82px;font-weight:bold;color:#0e1524;transform:scaleX(0.8722);-webkit-text-stroke:0.3px #0e1524">сипаттамасы</div>
<div class="t" id="t13" style="left:352.40px;top:395.08px;font-family:'Liberation Serif',serif;font-size:10.69px;line-height:12.82px;font-weight:bold;color:#0e1524;transform:scaleX(0.8968);-webkit-text-stroke:0.3px #0e1524">Студенттердің</div>
<div class="t" id="t14" style="left:364.30px;top:407.18px;font-family:'Liberation Serif',serif;font-size:10.69px;line-height:12.82px;font-weight:bold;color:#0e1524;transform:scaleX(0.8816);-webkit-text-stroke:0.3px #0e1524">атқарған</div>
<div class="t" id="t15" style="left:357.80px;top:417.98px;font-family:'Liberation Serif',serif;font-size:10.69px;line-height:12.82px;font-weight:bold;color:#0e1524;transform:scaleX(0.8772);-webkit-text-stroke:0.3px #0e1524">жұмыстары</div>
<div class="t" id="t16" style="left:485.10px;top:295.08px;font-family:'Liberation Serif',serif;font-size:10.69px;line-height:12.82px;font-weight:bold;color:#0e1524;transform:scaleX(0.8759);-webkit-text-stroke:0.3px #0e1524">Қолданылған</div>
<div class="t" id="t17" style="left:487.30px;top:306.58px;font-family:'Liberation Serif',serif;font-size:10.69px;line-height:12.82px;font-weight:bold;color:#0e1524;transform:scaleX(0.8821);-webkit-text-stroke:0.3px #0e1524">әдіс-тәсілдер</div>
<div class="t" id="t18" style="left:36.30px;top:454.90px;font-family:'Liberation Sans',sans-serif;font-size:11.63px;line-height:13.95px;font-weight:bold;color:#363a3e;transform:scaleX(0.8418);">Prezi</div>
<div class="t" id="t19" style="left:565.00px;top:478.59px;font-family:'Liberation Sans',sans-serif;font-size:8.14px;line-height:9.77px;font-weight:normal;color:#e4e6e8;transform:scaleX(0.8096);">Вид докладчика</div>
<div class="t" id="t20" style="left:706.30px;top:26.03px;font-family:'Liberation Sans',sans-serif;font-size:9.16px;line-height:10.99px;font-weight:bold;color:#232323;transform:scaleX(0.8523);">Участники (121)</div>
<div class="t" id="t21" style="left:667.80px;top:58.14px;font-family:'Liberation Sans',sans-serif;font-size:8.72px;line-height:10.47px;font-weight:normal;color:#747478;transform:scaleX(0.8653);">Найти участника</div>
<div class="t" id="t22" style="left:673.80px;top:84.60px;font-family:'Liberation Sans',sans-serif;font-size:9.30px;line-height:11.16px;font-weight:normal;color:#3a3a3e;transform:scaleX(0.8441);-webkit-text-stroke:0.2px #3a3a3e">Айзат Турысбекова</div>
<div class="t" id="t23" style="left:673.80px;top:112.60px;font-family:'Liberation Sans',sans-serif;font-size:9.30px;line-height:11.16px;font-weight:normal;color:#3a3a3e;transform:scaleX(0.8452);-webkit-text-stroke:0.2px #3a3a3e">Айнур Шайпан</div>
<div class="t" id="t24" style="left:673.80px;top:140.60px;font-family:'Liberation Sans',sans-serif;font-size:9.30px;line-height:11.16px;font-weight:normal;color:#3a3a3e;transform:scaleX(0.8180);-webkit-text-stroke:0.2px #3a3a3e">Айтқұл Айдана</div>
<div class="t" id="t25" style="left:673.80px;top:168.60px;font-family:'Liberation Sans',sans-serif;font-size:9.30px;line-height:11.16px;font-weight:normal;color:#3a3a3e;transform:scaleX(0.8227);-webkit-text-stroke:0.2px #3a3a3e">Айым Сағынғалиева</div>
<div class="t" id="t26" style="left:673.80px;top:196.60px;font-family:'Liberation Sans',sans-serif;font-size:9.30px;line-height:11.16px;font-weight:normal;color:#3a3a3e;transform:scaleX(0.8329);-webkit-text-stroke:0.2px #3a3a3e">Алима Жалғасбек</div>
<div class="t" id="t27" style="left:673.80px;top:224.60px;font-family:'Liberation Sans',sans-serif;font-size:9.30px;line-height:11.16px;font-weight:normal;color:#3a3a3e;transform:scaleX(0.8248);-webkit-text-stroke:0.2px #3a3a3e">Алия Бейсекова</div>
<div class="t" id="t28" style="left:673.80px;top:252.60px;font-family:'Liberation Sans',sans-serif;font-size:9.30px;line-height:11.16px;font-weight:normal;color:#3a3a3e;transform:scaleX(0.8240);-webkit-text-stroke:0.2px #3a3a3e">Алия Дильдаева</div>
<div class="t" id="t29" style="left:673.80px;top:280.60px;font-family:'Liberation Sans',sans-serif;font-size:9.30px;line-height:11.16px;font-weight:normal;color:#3a3a3e;transform:scaleX(0.8258);-webkit-text-stroke:0.2px #3a3a3e">Алмасбек Балжан</div>
<div class="t" id="t30" style="left:673.80px;top:308.60px;font-family:'Liberation Sans',sans-serif;font-size:9.30px;line-height:11.16px;font-weight:normal;color:#3a3a3e;transform:scaleX(0.8288);-webkit-text-stroke:0.2px #3a3a3e">Альбина Бейкитова</div>
<div class="t" id="t31" style="left:673.80px;top:336.60px;font-family:'Liberation Sans',sans-serif;font-size:9.30px;line-height:11.16px;font-weight:normal;color:#3a3a3e;transform:scaleX(0.8400);-webkit-text-stroke:0.2px #3a3a3e">Аружан Аскар</div>
<div class="t" id="t32" style="left:673.80px;top:364.60px;font-family:'Liberation Sans',sans-serif;font-size:9.30px;line-height:11.16px;font-weight:normal;color:#3a3a3e;transform:scaleX(0.8284);-webkit-text-stroke:0.2px #3a3a3e">Аружан Сулеева</div>
<div class="t" id="t33" style="left:673.80px;top:392.60px;font-family:'Liberation Sans',sans-serif;font-size:9.30px;line-height:11.16px;font-weight:normal;color:#3a3a3e;transform:scaleX(0.8458);-webkit-text-stroke:0.2px #3a3a3e">Асель Кулназарова</div>
<div class="t" id="t34" style="left:673.80px;top:420.60px;font-family:'Liberation Sans',sans-serif;font-size:9.30px;line-height:11.16px;font-weight:normal;color:#3a3a3e;transform:scaleX(0.8300);-webkit-text-stroke:0.2px #3a3a3e">Асель Танатова</div>
<div class="t" id="t35" style="left:673.80px;top:448.60px;font-family:'Liberation Sans',sans-serif;font-size:9.30px;line-height:11.16px;font-weight:normal;color:#3a3a3e;transform:scaleX(0.8086);-webkit-text-stroke:0.2px #3a3a3e">Асем Утеева</div>
<div class="t" id="t36" style="left:667.10px;top:473.76px;font-family:'Liberation Sans',sans-serif;font-size:9.45px;line-height:11.34px;font-weight:normal;color:#2a2a2e;transform:scaleX(0.7797);">Пригласить</div>
<div class="t" id="t37" style="left:739.10px;top:473.76px;font-family:'Liberation Sans',sans-serif;font-size:9.45px;line-height:11.34px;font-weight:normal;color:#2a2a2e;transform:scaleX(0.7816);">Включить свой звук</div>
<div class="t" id="t38" style="left:766.70px;top:506.12px;font-family:'Liberation Sans',sans-serif;font-size:9.59px;line-height:11.51px;font-weight:normal;color:#ffffff;transform:scaleX(0.7703);-webkit-text-stroke:0.2px #fff">ҚАЗ</div>
<div class="t" id="t39" style="left:799.00px;top:501.01px;font-family:'Liberation Sans',sans-serif;font-size:8.87px;line-height:10.64px;font-weight:normal;color:#ffffff;transform:scaleX(0.7390);-webkit-text-stroke:0.2px #fff">11:25</div>
<div class="t" id="t40" style="left:789.60px;top:512.02px;font-family:'Liberation Sans',sans-serif;font-size:8.43px;line-height:10.12px;font-weight:normal;color:#ffffff;transform:scaleX(0.8740);-webkit-text-stroke:0.2px #fff">11-жел-21</div>
</body></html>
